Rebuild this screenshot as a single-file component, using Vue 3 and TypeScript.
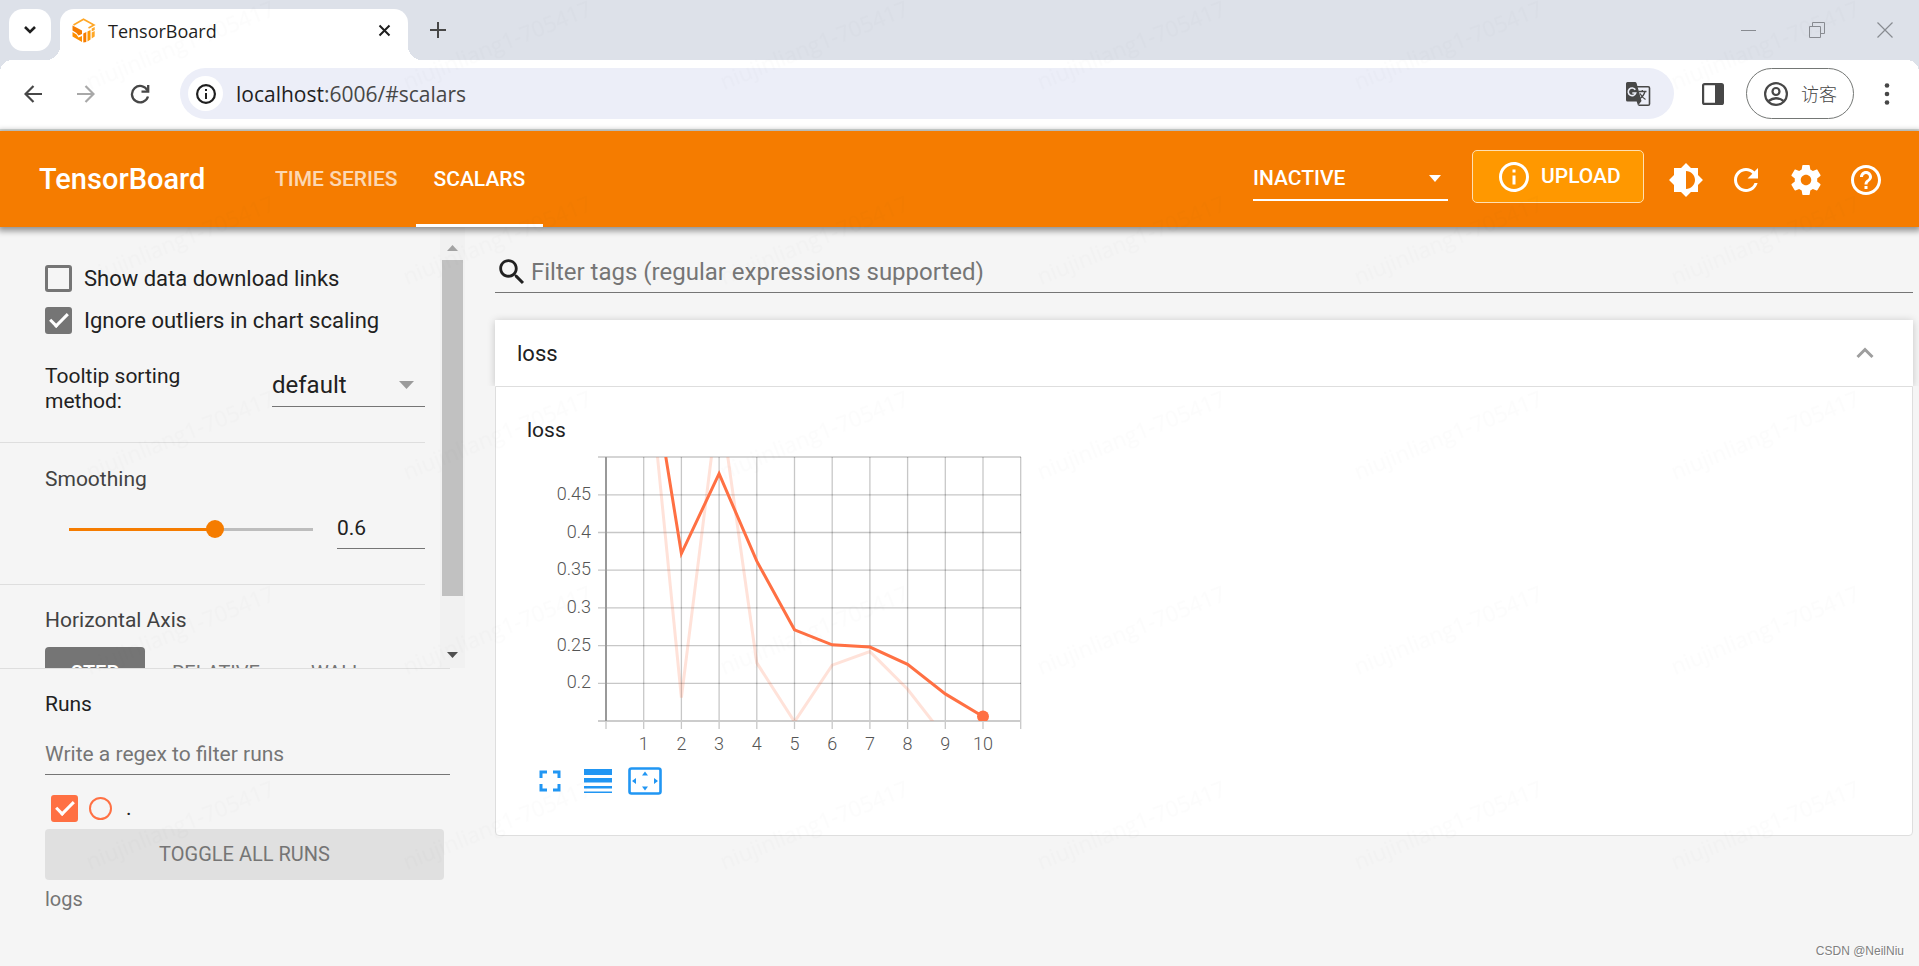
<script setup lang="ts">
import { computed, ref } from 'vue'

interface Point { step: number; value: number }

const tabs = ['TIME SERIES', 'SCALARS']
const activeTab = ref('SCALARS')
const dashboard = ref('INACTIVE')
const url = ref('localhost:6006/#scalars')
const showDownload = ref(false)
const ignoreOutliers = ref(true)
const sorting = ref('default')
const smoothing = ref(0.6)
const axisModes = ['STEP', 'RELATIVE', 'WALL']
const axisMode = ref('STEP')
const runsFilter = ref('')
const tagFilter = ref('')
const runVisible = ref(true)

const fill = computed(() => ({ '--fill': `${smoothing.value * 100}%` }))

// Plot area: one unit step on either axis is 37.7 units wide.
const unit = 37.7
const plot = { left: 79, top: 7, right: 494, bottom: 271 }
const px = (step: number) => plot.left + step * unit
const py = (value: number) => plot.bottom - ((value - 0.15) / 0.05) * unit

const xTicks = Array.from({ length: 12 }, (_, i) => i)
const yTicks = [0.45, 0.4, 0.35, 0.3, 0.25, 0.2]

const raw: Point[] = [
  { step: 1, value: 0.685 }, { step: 2, value: 0.181 }, { step: 3, value: 0.582 },
  { step: 4, value: 0.227 }, { step: 5, value: 0.149 }, { step: 6, value: 0.224 },
  { step: 7, value: 0.242 }, { step: 8, value: 0.192 }, { step: 9, value: 0.128 },
]
const smooth: Point[] = [
  { step: 1, value: 0.682 }, { step: 2, value: 0.372 }, { step: 3, value: 0.478 },
  { step: 4, value: 0.362 }, { step: 5, value: 0.271 }, { step: 6, value: 0.251 },
  { step: 7, value: 0.248 }, { step: 8, value: 0.225 }, { step: 9, value: 0.186 },
  { step: 10, value: 0.156 },
]
const toPath = (points: Point[]) => points.map((p) => `${px(p.step).toFixed(1)},${py(p.value).toFixed(1)}`).join(' ')
</script>

<template>
  <div class="window">
    <div class="tabstrip">
      <button class="tab-search" aria-label="Search tabs">
        <svg width="14" height="10" viewBox="0 0 14 10"><path d="M2 2l5 5 5-5" fill="none" stroke="#1f1f1f" stroke-width="2.6" /></svg>
      </button>
      <div class="browser-tab">
        <svg width="24" height="25" viewBox="0 0 24 25" aria-hidden="true">
          <path d="M1.500 7L11.500 1.200L22 7L16.500 10" fill="none" stroke="#ffa726" stroke-width="1.600" />
          <path d="M.5 7.500L10 12.500V16L6.500 17.500L4.500 15L.5 12.500z" fill="#f57c00" />
          <path d="M.5 14L4.500 16.500L6.500 19.500L10 18V24L.5 18.500z" fill="#ff8f00" />
          <path d="M11.300 15.500L14.300 14V24L11.300 24.500z" fill="#f57c00" />
          <path d="M15.500 13.500L18.500 12V21.500L15.500 23.500z" fill="#ff9800" />
          <path d="M19.700 10.500L22.700 9V12L19.700 13.500zM19.700 14.500L22.700 13V18.500L19.700 20.500z" fill="#ffa726" />
        </svg>
        <span class="tab-title">TensorBoard</span>
        <button class="tab-close" aria-label="Close tab">
          <svg width="13" height="13" viewBox="0 0 13 13"><path d="M1.500 1.500l10 10M11.500 1.500l-10 10" stroke="#1f1f1f" stroke-width="2" /></svg>
        </button>
      </div>
      <button class="new-tab" aria-label="New tab">
        <svg width="16" height="16" viewBox="0 0 16 16"><path d="M8 0v16M0 8h16" stroke="#474747" stroke-width="2" /></svg>
      </button>
      <div class="window-buttons">
        <button aria-label="Minimize"><svg width="16" height="16" viewBox="0 0 16 16"><path d="M0 8.500h15" stroke="#888b91" /></svg></button>
        <button aria-label="Restore"><svg width="16" height="16" viewBox="0 0 16 16" fill="none" stroke="#888b91"><path d="M.5 4.500h11v11h-11zM3.500 4v-3.500h12v11h-4" /></svg></button>
        <button aria-label="Close"><svg width="16" height="16" viewBox="0 0 16 16"><path d="M.5.5l15 15M15.500.5l-15 15" stroke="#888b91" stroke-width="1.200" /></svg></button>
      </div>
    </div>

    <div class="toolbar">
      <button class="nav" aria-label="Back"><svg width="18" height="18" viewBox="0 0 18 18" fill="none" stroke="#474747" stroke-width="2.200"><path d="M18 9H2M9.500 1L1.500 9l8 8" /></svg></button>
      <button class="nav" aria-label="Forward"><svg width="18" height="18" viewBox="0 0 18 18" fill="none" stroke="#a8a8a8" stroke-width="2.200"><path d="M0 9h16M8.500 1l8 8-8 8" /></svg></button>
      <button class="nav" aria-label="Reload"><svg width="20" height="20" viewBox="0 0 20 20" fill="none" stroke="#474747" stroke-width="2.300"><path d="M18 12.500A8.200 8.200 0 1 1 17.500 6.500" /><path d="M18.200 1v6.700h-6.700" /></svg></button>
      <div class="omnibox">
        <button class="site-info" aria-label="View site information">
          <svg width="20" height="20" viewBox="0 0 20 20"><circle cx="10" cy="10" r="8.900" fill="none" stroke="#1f1f1f" stroke-width="2.200" /><path d="M9 9h2v6H9zM9 5h2v2H9z" fill="#1f1f1f" /></svg>
        </button>
        <div class="url-field">
          <span class="url-shown" aria-hidden="true">localhost<span>:6006/#scalars</span></span>
          <input v-model="url" class="url" aria-label="Address" />
        </div>
        <button class="translate" aria-label="Translate this page">
          <svg width="26" height="26" viewBox="0 0 26 26">
            <path d="M12 5.800h11.200q1.300 0 1.300 1.300v15.800q0 1.300-1.300 1.300H13.500" fill="none" stroke="#474747" stroke-width="1.600" />
            <path d="M2.500 1h7.500q1.200 0 1.600 1.200L16.500 20 13 24.500l-1.300-4H2.500Q1 20.500 1 19V2.500Q1 1 2.500 1z" fill="#474747" />
            <path d="M10.300 8.800A3.800 3.800 0 1 0 10.700 12H7.300" fill="none" stroke="#eceef8" stroke-width="1.600" />
            <path d="M13.500 10.500h8M17.300 9v1.500M20 10.500q-1.500 5-5 7M15 12.500q2 4 5.500 6" fill="none" stroke="#474747" stroke-width="1.300" />
          </svg>
        </button>
      </div>
      <button class="side-panel" aria-label="Side panel"><svg width="22" height="22" viewBox="0 0 22 22"><rect x="1.100" y="1.100" width="19.800" height="19.800" rx="1.500" fill="none" stroke="#474747" stroke-width="2.200" /><path d="M13 1h8v20h-8z" fill="#474747" /></svg></button>
      <button class="guest">
        <svg width="24" height="24" viewBox="0 0 24 24" fill="none" stroke="#474747" stroke-width="2.200"><circle cx="12" cy="12" r="10.900" /><circle cx="12" cy="9.500" r="3.500" /><path d="M4.500 19q7.500-5.500 15 0" /></svg>
        <span>访客</span>
      </button>
      <button class="more" aria-label="Menu"><svg width="6" height="22" viewBox="0 0 6 22" fill="#474747"><circle cx="3" cy="2.500" r="2.300" /><circle cx="3" cy="11" r="2.300" /><circle cx="3" cy="19.500" r="2.300" /></svg></button>
    </div>

    <header class="header">
      <h1>TensorBoard</h1>
      <nav class="tabs">
        <button v-for="t in tabs" :key="t" :class="{ active: t === activeTab }" @click="activeTab = t">{{ t }}</button>
      </nav>
      <div class="inactive">
        <select v-model="dashboard" aria-label="Inactive dashboards"><option>INACTIVE</option></select>
        <svg width="12" height="7" viewBox="0 0 12 7"><path d="M0 0h12L6 7z" fill="#fff" /></svg>
      </div>
      <button class="upload">
        <svg width="36" height="36" viewBox="0 0 24 24" fill="#fff"><path d="M11 17h2v-6h-2v6zm1-15C6.480 2 2 6.480 2 12s4.480 10 10 10 10-4.480 10-10S17.520 2 12 2zm0 18c-4.410 0-8-3.590-8-8s3.590-8 8-8 8 3.590 8 8-3.590 8-8 8zM11 9h2V7h-2v2z" /></svg>
        UPLOAD
      </button>
      <div class="actions">
        <button aria-label="Theme"><svg viewBox="0 0 24 24"><path d="M20 8.690V4h-4.690L12 .69 8.690 4H4v4.690L.69 12 4 15.310V20h4.690L12 23.310 15.310 20H20v-4.690L23.310 12 20 8.690zM12 18V6c3.310 0 6 2.690 6 6s-2.690 6-6 6z" /></svg></button>
        <button aria-label="Reload data"><svg viewBox="0 0 24 24"><path d="M17.650 6.350C16.200 4.900 14.210 4 12 4c-4.420 0-7.990 3.580-7.990 8s3.570 8 7.990 8c3.730 0 6.840-2.550 7.730-6h-2.080c-.82 2.330-3.040 4-5.650 4-3.310 0-6-2.690-6-6s2.690-6 6-6c1.660 0 3.140.69 4.220 1.780L13 11h7V4l-2.350 2.350z" /></svg></button>
        <button aria-label="Settings"><svg viewBox="0 0 24 24"><path d="M19.430 12.980c.04-.32.07-.64.07-.98s-.03-.66-.07-.98l2.110-1.650c.19-.15.24-.42.12-.64l-2-3.460c-.12-.22-.39-.3-.61-.22l-2.490 1c-.52-.4-1.080-.73-1.690-.98l-.38-2.650C14.460 2.180 14.250 2 14 2h-4c-.25 0-.46.18-.49.42l-.38 2.650c-.61.25-1.170.59-1.690.98l-2.490-1c-.23-.09-.49 0-.61.22l-2 3.460c-.13.22-.07.49.12.64l2.110 1.650c-.04.32-.07.65-.07.98s.03.66.07.98l-2.110 1.650c-.19.15-.24.42-.12.64l2 3.460c.12.22.39.3.61.22l2.490-1c.52.4 1.080.73 1.690.98l.38 2.650c.03.24.24.42.49.42h4c.25 0 .46-.18.49-.42l.38-2.650c.61-.25 1.170-.59 1.690-.98l2.490 1c.23.09.49 0 .61-.22l2-3.460c.12-.22.07-.49-.12-.64l-2.110-1.650zM12 15.500c-1.930 0-3.500-1.570-3.500-3.500s1.570-3.500 3.500-3.500 3.500 1.570 3.500 3.500-1.570 3.500-3.500 3.500z" /></svg></button>
        <button aria-label="Help"><svg viewBox="0 0 24 24"><path d="M11 18h2v-2h-2v2zm1-16C6.480 2 2 6.480 2 12s4.480 10 10 10 10-4.480 10-10S17.520 2 12 2zm0 18c-4.410 0-8-3.590-8-8s3.590-8 8-8 8 3.590 8 8-3.590 8-8 8zm0-14c-2.210 0-4 1.790-4 4h2c0-1.100.9-2 2-2s2 .9 2 2c0 2-3 1.750-3 5h2c0-2.250 3-2.500 3-5 0-2.210-1.790-4-4-4z" /></svg></button>
      </div>
    </header>

    <div class="body">
      <aside class="sidebar">
        <div class="settings">
          <div class="settings-content">
            <section class="group general">
              <label class="check"><input v-model="showDownload" type="checkbox" />Show data download links</label>
              <label class="check"><input v-model="ignoreOutliers" type="checkbox" />Ignore outliers in chart scaling</label>
              <div class="sorting">
                <label for="sorting">Tooltip sorting method:</label>
                <div class="select-box">
                  <select id="sorting" v-model="sorting">
                    <option>default</option><option>ascending</option><option>descending</option><option>nearest</option>
                  </select>
                  <svg width="15" height="8" viewBox="0 0 15 8"><path d="M0 0h15L7.500 8z" fill="#9b9b9b" /></svg>
                </div>
              </div>
            </section>
            <section class="group smoothing">
              <label for="smoothing">Smoothing</label>
              <div class="slider-row">
                <input id="smoothing" v-model.number="smoothing" type="range" min="0" max="1" step="0.001" :style="fill" />
                <input v-model.number="smoothing" class="number" aria-label="Smoothing value" />
              </div>
            </section>
            <section class="group axis">
              <span>Horizontal Axis</span>
              <div class="modes">
                <button v-for="m in axisModes" :key="m" :class="{ on: m === axisMode }" @click="axisMode = m">{{ m }}</button>
              </div>
            </section>
          </div>
          <div class="scrollbar" aria-hidden="true">
            <svg width="11" height="6" viewBox="0 0 11 6"><path d="M0 6h11L5.500 0z" fill="#a3a3a3" /></svg>
            <div class="thumb"></div>
            <svg width="11" height="6" viewBox="0 0 11 6"><path d="M0 0h11L5.500 6z" fill="#505050" /></svg>
          </div>
        </div>
        <div class="runs">
          <label for="runs-filter">Runs</label>
          <input id="runs-filter" v-model="runsFilter" class="runs-filter" placeholder="Write a regex to filter runs" />
          <label class="run"><input v-model="runVisible" type="checkbox" /><span class="ring"></span><span>.</span></label>
          <button class="toggle">TOGGLE ALL RUNS</button>
          <span class="logs">logs</span>
        </div>
      </aside>

      <main class="main">
        <label class="tag-filter">
          <svg width="34" height="34" viewBox="0 0 24 24" fill="#212121"><path d="M15.500 14h-.79l-.28-.27C15.410 12.590 16 11.110 16 9.500 16 5.910 13.090 3 9.500 3S3 5.910 3 9.500 5.910 16 9.500 16c1.610 0 3.090-.59 4.230-1.570l.27.28v.79l5 4.990L20.490 19l-4.990-5zm-6 0C7.010 14 5 11.990 5 9.500S7.010 5 9.500 5 14 7.010 14 9.500 11.990 14 9.500 14z" /></svg>
          <input v-model="tagFilter" aria-label="Filter tags" placeholder="Filter tags (regular expressions supported)" />
        </label>
        <section class="card">
          <button class="card-header" aria-expanded="true">
            <span>loss</span>
            <svg width="18" height="12" viewBox="0 0 18 12"><path d="M1.500 10L9 2.500l7.500 7.500" fill="none" stroke="#9e9e9e" stroke-width="3" /></svg>
          </button>
          <div class="card-body">
            <h2>loss</h2>
            <svg class="chart" width="500" height="304" viewBox="0 0 500 304" role="img" aria-label="loss by step">
              <defs>
                <clipPath id="plot"><rect :x="plot.left" :y="plot.top" :width="plot.right - plot.left" :height="plot.bottom - plot.top" /></clipPath>
              </defs>
              <g class="grid">
                <line v-for="x in xTicks" :key="'x' + x" :x1="px(x)" :x2="px(x)" :y1="plot.top" :y2="plot.bottom + 8" />
                <line v-for="y in yTicks" :key="'y' + y" :x1="plot.left - 8" :x2="plot.right" :y1="py(y)" :y2="py(y)" />
                <line :x1="plot.left - 8" :x2="plot.right" :y1="plot.top" :y2="plot.top" />
              </g>
              <line class="x-axis" :x1="plot.left - 8" :x2="plot.right" :y1="plot.bottom" :y2="plot.bottom" />
              <line class="y-axis" :x1="plot.left" :x2="plot.left" :y1="plot.top" :y2="plot.bottom" />
              <g clip-path="url(#plot)">
                <polyline class="series faint" :points="toPath(raw)" />
                <polyline class="series" :points="toPath(smooth)" />
                <circle :cx="px(10)" :cy="py(0.156)" r="6" fill="#ff7043" />
              </g>
              <g class="labels">
                <text v-for="y in yTicks" :key="y" :x="plot.left - 15" :y="py(y) + 5" text-anchor="end">{{ y }}</text>
                <text v-for="x in xTicks.slice(1, 11)" :key="x" :x="px(x)" :y="plot.bottom + 29" text-anchor="middle">{{ x }}</text>
              </g>
            </svg>
            <div class="chart-tools">
              <button aria-label="Fit to card"><svg width="36" height="36" viewBox="0 0 24 24"><path d="M7 14H5v5h5v-2H7v-3zm-2-4h2V7h3V5H5v5zm12 7h-3v2h5v-5h-2v3zM14 5v2h3v3h2V5h-5z" /></svg></button>
              <button aria-label="Toggle y-axis log scale"><svg width="28" height="24" viewBox="0 0 28 24"><path d="M0 0h28v6H0zM0 9h28v4.500H0zM0 17h28v2.500H0zM0 22.500h28V24H0z" /></svg></button>
              <button aria-label="Fit domain to data"><svg width="34" height="28" viewBox="0 0 34 28"><rect x="1.500" y="1.500" width="31" height="25" rx="2" fill="none" stroke="#2196f3" stroke-width="2.600" /><path d="M14 8.500h6L17 4.500zM14 19.500h6l-3 4zM8 11v6l-4-3zM26 11v6l4-3z" /></svg></button>
            </div>
          </div>
        </section>
      </main>
    </div>

    <svg class="watermark" aria-hidden="true">
      <defs>
        <pattern id="mark" width="317" height="195" patternUnits="userSpaceOnUse">
          <text x="90" y="90" transform="rotate(-22 90 90)">niujinliang1-705417</text>
        </pattern>
      </defs>
      <rect width="100%" height="100%" fill="url(#mark)" />
    </svg>
    <span class="credit">CSDN @NeilNiu</span>
  </div>
</template>

<style>
body { margin: 0; }
</style>

<style scoped>
*, *::before, *::after { box-sizing: border-box; }
button, input, select { font: inherit; color: inherit; margin: 0; border: 0; padding: 0; background: none; border-radius: 0; outline: none; }
button { cursor: pointer; }
svg { display: block; flex: none; }
select { appearance: none; }

.window { position: relative; display: flex; flex-direction: column; height: 100vh; overflow: hidden; background: #f5f5f5; color: #212121; font: 21px/25px Roboto, sans-serif; }

.tabstrip { display: flex; flex: none; height: 60px; background: #dde1e9; padding: 9px 26px 0 9px; font: 18px/24px "Open Sans", sans-serif; color: #1f1f1f; }
.tab-search { display: flex; align-items: center; justify-content: center; width: 42px; height: 42px; border-radius: 14px; background: #fff; margin-right: 9px; }
.browser-tab { position: relative; display: flex; align-items: center; width: 348px; height: 51px; padding: 0 17px 8px 12px; background: #fff; border-radius: 14px 14px 0 0; }
.browser-tab::before, .browser-tab::after { content: ""; position: absolute; bottom: 0; width: 14px; height: 14px; }
.browser-tab::before { right: 100%; background: radial-gradient(circle at 0 0, transparent 14px, #fff 14px); }
.browser-tab::after { left: 100%; background: radial-gradient(circle at 100% 0, transparent 14px, #fff 14px); }
.tab-title { flex: 1; padding-left: 12px; }
.new-tab { align-self: flex-start; height: 42px; margin-left: 22px; }
.window-buttons { display: flex; gap: 52px; height: 42px; margin-left: auto; }

.toolbar { position: relative; display: flex; flex: none; align-items: center; height: 71px; padding: 0 29px 2px 24px; background: #fff; border-bottom: 2px solid #dde3e1; }
.toolbar::before, .toolbar::after { content: ""; position: absolute; top: 0; width: 12px; height: 12px; }
.toolbar::before { left: 0; background: radial-gradient(circle at 100% 100%, transparent 12px, #dde1e9 12px); }
.toolbar::after { right: 0; background: radial-gradient(circle at 0 100%, transparent 12px, #dde1e9 12px); }
.nav { display: flex; width: 20px; margin-right: 33px; }
.omnibox { display: flex; flex: 1; align-items: center; height: 51px; margin-left: -3px; padding: 0 23px 0 8px; background: #eceef8; border-radius: 26px; }
.site-info { display: flex; align-items: center; justify-content: center; width: 35px; height: 35px; border-radius: 50%; background: #fff; }
.url-field { position: relative; flex: 1; margin-left: 13px; height: 30px; font: 21px/30px "Open Sans", sans-serif; color: #1f1f1f; }
.url-shown { position: absolute; left: 0; top: 0; pointer-events: none; }
.url-shown span { color: #474747; }
.url { display: block; width: 100%; height: 30px; color: transparent; caret-color: #1f1f1f; }
.side-panel { margin: 0 22px 0 28px; }
.guest { display: flex; align-items: center; gap: 13px; width: 108px; height: 51px; padding-left: 17px; border: 1px solid #747775; border-radius: 26px; font: 18px/24px "Open Sans", "Noto Sans CJK SC", sans-serif; font-weight: 300; color: #474747; }
.more { margin-left: 30px; }

.header { position: relative; z-index: 2; display: flex; flex: none; align-items: center; height: 96px; padding: 0 35px 0 39px; background: #f57c00; color: #fff; box-shadow: 0 2px 6px 2px rgba(0, 0, 0, .4); font-weight: 500; }
.header h1 { margin: 0 55px 0 0; width: 163px; white-space: nowrap; font-size: 29px; font-weight: 500; }
.tabs { display: flex; height: 96px; }
.tabs button { padding: 0 18px; opacity: .7; }
.tabs button.active { opacity: 1; box-shadow: inset 0 -3px #fff; }
.inactive { display: flex; align-items: center; width: 195px; height: 43px; margin-left: auto; padding-right: 7px; border-bottom: 2px solid #fff; }
.inactive select { flex: 1; }
.upload { display: flex; align-self: flex-start; align-items: center; gap: 9px; width: 172px; height: 53px; margin: 19px 24px 0; padding-left: 23px; background: #ff9800; border: 1px solid #ffe0b2; border-radius: 5px; }
.actions { display: flex; gap: 24px; padding-top: 2px; }
.actions svg { width: 36px; height: 36px; fill: #fff; }

.body { display: flex; flex: 1; min-height: 0; }
.sidebar { display: flex; flex-direction: column; flex: none; width: 465px; }
.settings { display: flex; flex: 1; min-height: 0; overflow: hidden; }
.settings-content { width: 425px; margin-right: 15px; }
.group { display: flex; flex-direction: column; padding-left: 45px; color: #424242; }
.general { height: 216px; padding-top: 30px; border-bottom: 1px solid #dedede; color: #212121; }
.check { display: flex; align-items: center; gap: 12px; height: 42px; font-size: 22px; white-space: nowrap; }
input[type="checkbox"] { appearance: none; position: relative; flex: none; width: 27px; height: 27px; border: 3px solid #757575; border-radius: 3px; }
input[type="checkbox"]:checked { background: #757575; }
input[type="checkbox"]:checked::after { content: ""; position: absolute; left: 6px; top: -1px; width: 10px; height: 18px; border: solid #fff; border-width: 0 3px 3px 0; transform: rotate(45deg); }
.sorting { display: flex; justify-content: space-between; margin-top: 8px; }
.sorting label { width: 160px; padding-top: 15px; }
.select-box { display: flex; align-items: center; width: 153px; height: 43px; margin-top: 15px; padding-right: 11px; border-bottom: 1px solid #757575; font-size: 24px; }
.select-box select { flex: 1; height: 40px; }
.smoothing { height: 142px; padding-top: 24px; border-bottom: 1px solid #dedede; }
.slider-row { display: flex; align-items: center; justify-content: space-between; height: 40px; margin-top: 17px; padding-left: 15px; }
input[type="range"] { appearance: none; width: 262px; height: 18px; background: linear-gradient(to right, #f57c00 var(--fill), #bdbdbd var(--fill)) center / calc(100% - 18px) 3px no-repeat; }
input[type="range"]::-webkit-slider-thumb { appearance: none; width: 18px; height: 18px; border-radius: 50%; background: #f57c00; }
.number { width: 88px; height: 40px; padding-bottom: 2px; border-bottom: 1px solid #757575; color: #212121; }
.axis { padding-top: 23px; }
.modes { display: flex; gap: 5px; margin-top: 14px; }
.modes button { height: 53px; min-width: 100px; padding: 0 22px; border-radius: 4px; color: #757575; font-size: 20px; white-space: nowrap; }
.modes button.on { background: #757575; color: #fff; font-weight: 500; }
.scrollbar { display: flex; flex-direction: column; align-items: center; width: 25px; padding: 18px 0 10px; background: #f1f1f1; }
.thumb { width: 21px; height: 336px; margin: 9px 0 auto; background: #c1c1c1; }

.runs { display: flex; flex: none; flex-direction: column; width: 450px; height: 298px; padding: 23px 0 0 45px; border-top: 1px solid #dedede; }
.runs-filter { height: 40px; margin-top: 18px; padding-bottom: 2px; border-bottom: 1px solid #757575; }
.runs-filter::placeholder, .tag-filter input::placeholder { color: #757575; opacity: 1; }
.run { display: flex; align-items: center; height: 54px; padding: 13px 0 0 6px; }
.run input[type="checkbox"] { border-color: #ff7043; }
.run input[type="checkbox"]:checked { background: #ff7043; }
.ring { width: 23px; height: 23px; margin: 0 14px 0 11px; border: 2px solid #ff7043; border-radius: 50%; }
.toggle { height: 51px; margin-right: 6px; border-radius: 4px; background: #e0e0e0; color: #757575; font-size: 20px; }
.logs { margin-top: 7px; color: #757575; font-size: 20px; }

.main { flex: 1; min-width: 0; padding: 23px 6px 0 30px; }
.tag-filter { display: flex; align-items: center; height: 43px; padding-top: 2px; border-bottom: 1px solid #757575; font-size: 24px; }
.tag-filter input { flex: 1; height: 40px; margin-left: 2px; }
.card { margin-top: 27px; }
.card-header { display: flex; align-items: center; justify-content: space-between; width: 100%; height: 66px; padding: 0 39px 0 22px; background: #fff; box-shadow: 0 1px 8px rgba(0, 0, 0, .2); font-size: 22px; clip-path: inset(-10px -10px 0 -10px); }
.card-body { height: 450px; border: 1px solid #dedede; border-radius: 0 0 4px 4px; background: #fff; padding: 31px 31px 0; }
.card-body h2 { margin: 0; font-size: 21px; font-weight: 400; }
.chart { margin-top: 7px; }
.grid line { stroke: rgba(0, 0, 0, .22); stroke-width: 1.300; }
.x-axis { stroke: #ccc; stroke-width: 2; }
.y-axis { stroke: #999; stroke-width: 2; }
.series { fill: none; stroke: #ff7043; stroke-width: 3; }
.faint { opacity: .2; }
.labels text { fill: #555; font-size: 18px; font-weight: 300; }
.chart-tools { display: flex; align-items: center; gap: 16px; height: 36px; margin-top: 9px; padding-left: 5px; }
.chart-tools svg { fill: #2196f3; }

.watermark { position: absolute; inset: 0; z-index: 3; width: 100%; height: 100%; pointer-events: none; }
.watermark text { fill: rgba(0, 0, 0, .01); font: 22px "Open Sans", sans-serif; }
.credit { position: absolute; right: 15px; bottom: 6px; z-index: 4; color: #808080; font: 12px/18px "Liberation Sans", sans-serif; text-shadow: 1px 1px #fff; }
</style>
